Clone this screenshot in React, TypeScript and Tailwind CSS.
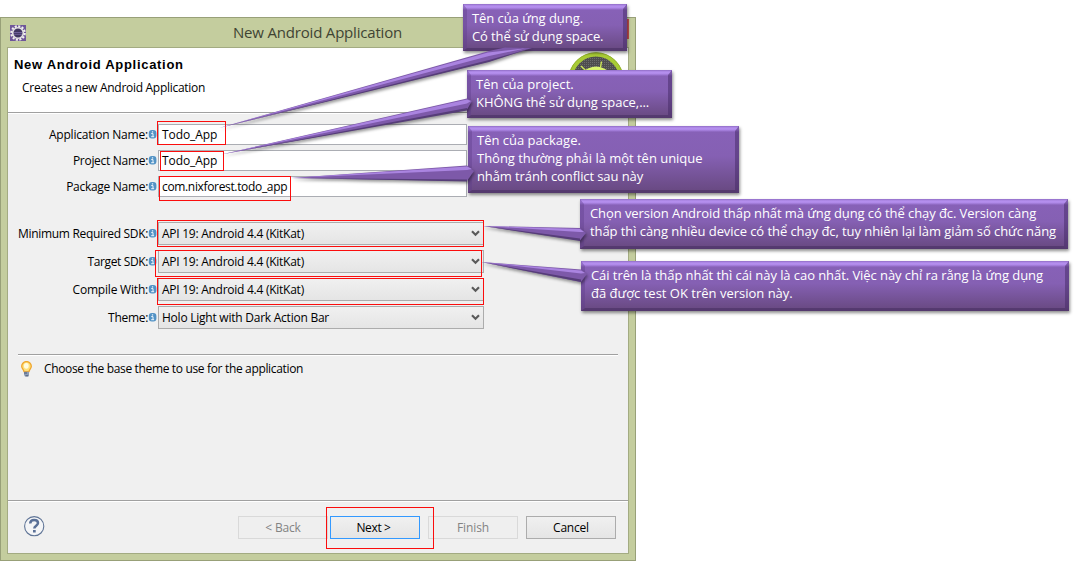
import type { ReactNode } from "react";

function InfoIcon() {
  return (
    <svg className="ml-px h-[9px] w-[7px] shrink-0 overflow-visible" viewBox="0 0 7 9">
      <rect x="-0.2" y="0" width="7.6" height="8.4" rx="3" fill="#5292c5" />
      <path d="M2.2 3.6h1.800v3M2.2 6.7h2.900" stroke="#eef6fc" strokeWidth="1" fill="none" />
      <rect x="2.9" y="1.300" width="1.300" height="1.200" fill="#eef6fc" />
    </svg>
  );
}

function Row({ label, tracking, children }: { label: string; tracking: string; children: ReactNode }) {
  return (
    <div className="flex items-center">
      <div className={`w-[140px] shrink-0 text-right ${tracking}`}>{label}</div>
      <InfoIcon />
      <div className="ml-[2px]">{children}</div>
    </div>
  );
}

function Field({ value, tracking }: { value: string; tracking: string }) {
  return (
    <div className="flex h-[21px] w-[309px] items-center border border-[#abadb3] bg-white pl-[3px]">
      <span className={tracking}>{value}</span>
    </div>
  );
}

function Combo({ value, tracking }: { value: string; tracking: string }) {
  return (
    <div className="flex h-[23px] w-[326px] items-center justify-between border border-[#acacac] bg-linear-to-b from-[#f0f0f0] to-[#e5e5e5] pr-[3px] pl-[3px]">
      <span className={tracking}>{value}</span>
      <svg className="h-[7px] w-[9px]" viewBox="0 0 9 7">
        <path d="M1 1.2l3.5 3.6L8 1.2" stroke="#5a5a5a" strokeWidth="2.1" fill="none" />
      </svg>
    </div>
  );
}

function Button({ text, look, tracking }: { text: string; look: string; tracking: string }) {
  return (
    <div className={`flex h-[23px] w-[90px] items-center justify-center border ${look}`}>
      <span className={tracking}>{text}</span>
    </div>
  );
}

function Mark({ place }: { place: string }) {
  return <div className={`absolute border border-[#fb0d0d] ${place}`} />;
}

function Callout({ place, lines }: { place: string; lines: [string, string][] }) {
  return (
    <div
      className={`absolute border-x-[4px] border-t-[5px] border-b-[3px] border-t-transparent border-r-[#452a66]/50 border-b-[#452d60]/55 border-l-[#5f3f8c]/40 bg-[linear-gradient(to_bottom,#8b68c0_0px,#a883e0_1px,#b892f2_3px,#9a74d0_5px,#8761b7_6px,#8560b3_45%,#67487f_100%)] bg-origin-border pl-[6px] font-['Open_Sans','Noto_Sans',sans-serif] text-[13px] leading-[18px] whitespace-nowrap text-white shadow-[1px_2px_3px_rgba(0,0,0,0.45)] ${place}`}
    >
      {lines.map(([text, tracking]) => (
        <div key={text} className={tracking}>{text}</div>
      ))}
    </div>
  );
}

function EclipseIcon() {
  return (
    <svg className="h-4 w-4" viewBox="0 0 16 16">
      <rect width="16" height="16" fill="#6f5799" />
      <circle cx="8" cy="8" r="6.700" fill="none" stroke="#f1f0ee" strokeWidth="2.200" strokeDasharray="2.100 1.408" />
      <circle cx="8" cy="8" r="5.300" fill="#3f3560" stroke="#e4e2e4" strokeWidth="1.600" />
      <path d="M4 7.500h8M4 9.300h8" stroke="#7565a0" strokeWidth="0.900" />
    </svg>
  );
}

function AndroidBadge() {
  return (
    <svg className="h-[56px] w-[56px]" viewBox="0 0 56 56">
      <defs>
        <pattern id="mesh" width="2" height="2" patternUnits="userSpaceOnUse">
          <rect width="2" height="2" fill="#4e4e4e" />
          <rect width="1" height="1" fill="#6c6c6c" />
        </pattern>
      </defs>
      <circle cx="28" cy="28" r="25.500" fill="url(#mesh)" stroke="#a8cb35" strokeWidth="4" />
      <circle cx="28" cy="28" r="27.300" fill="none" stroke="#8fae2a" strokeWidth="0.900" />
      <path d="M13 14l4.500 4.500M33.500 9.500l-1 6" stroke="#d0ea55" strokeWidth="1.400" />
      <path d="M13 21Q28 8 43 21z" fill="#dcf76e" />
    </svg>
  );
}

function BulbIcon() {
  return (
    <svg className="h-4 w-[11px]" viewBox="0 0 11 16">
      <path d="M5.5.6a4.7 4.7 0 0 0-4.8 4.7c0 2.4 2 3 2.3 5.3h5c.3-2.3 2.3-2.900 2.300-5.300A4.700 4.700 0 0 0 5.500.6z" fill="#ffe07a" stroke="#efa52c" strokeWidth="1.300" />
      <ellipse cx="5.300" cy="4.800" rx="2.400" ry="2.900" fill="#fffbe0" />
      <path d="M3 10.800h5v3L7 15.500H4l-1-1.700z" fill="#8d9db6" />
      <path d="M3 12h3M4.500 14.800h3" stroke="#4c5b78" strokeWidth="1" />
    </svg>
  );
}

function HelpIcon() {
  return (
    <svg className="h-[21px] w-[21px]" viewBox="0 0 21 21">
      <circle cx="10.200" cy="10.200" r="9.600" fill="#f4f5f7" stroke="#5f7496" strokeWidth="1.100" />
      <path d="M6.200 7.500c.1-2.500 1.700-3.600 3.900-3.600 2.300 0 3.900 1.200 3.900 3.200 0 2.600-3.700 2.600-3.700 5.400" fill="none" stroke="#5a7097" strokeWidth="2.500" />
      <rect x="9" y="14" width="2.700" height="2.500" fill="#5a7097" />
    </svg>
  );
}

const tails = [
  { id: "t1", body: "219,128 489,51 505,47.5 532,48 489,61.5", light: "219,128 488,52.5 525,48.5 489,56", dark: "219,128 489,60 532,48 489,62" },
  { id: "t2", body: "221,154.5 467,98.5 472,101 467,109.5", light: "221,154.5 467,99.5 471,101 467,103.5", dark: "221,154.5 467,108 467,110.5" },
  { id: "t3", body: "291,178 467,165.5 474,171 467,181", light: "291,178 467,166.5 472,169 467,170", dark: "291,178 467,179.5 467,181.5" },
  { id: "t4", body: "483,226 580,228 586,233 580,240.5", light: "483,226 580,229 584,232 580,232", dark: "483,226 580,238.5 580,241" },
  { id: "t5", body: "481,262 581,269.5 587,274 581,282", light: "481,262 581,270.5 585,273 581,273.5", dark: "481,262 581,279.5 581,282" },
];

function Tails() {
  return (
    <svg className="absolute top-0 left-0 h-[561px] w-[1075px] drop-shadow-[1px_2px_1.5px_rgba(0,0,0,0.4)]" viewBox="0 0 1075 561">
      {tails.map((t) => (
        <g key={t.id}>
          <polygon points={t.body} fill="#7d59a9" />
          <polygon points={t.light} fill="#aa84e0" />
          <polygon points={t.dark} fill="#563d78" />
        </g>
      ))}
    </svg>
  );
}

export default function App() {
  return (
    <div className="relative h-[561px] w-[1075px] overflow-hidden bg-white pt-[17px] font-['Open_Sans','Noto_Sans',sans-serif] text-[12px] text-black">
      <div className="flex h-[544px] w-[636px] flex-col border border-[#98a078] bg-[#c4cd9e] px-[6px] pb-[6px]">
        <div className="flex h-[29px] shrink-0 items-center">
          <div className="ml-[3px]"><EclipseIcon /></div>
          <div className="flex-1 pl-[207px] text-[15px] leading-[20px] tracking-[-0.19px] whitespace-nowrap text-[#3f4433]">
            <div className="-mt-[2px]">New Android Application</div>
          </div>
          <div className="mb-[8px] h-[20px] w-[45px] bg-[#c75050]" />
        </div>
        <div className="flex min-h-0 flex-1 flex-col border border-[#a3ab82] bg-[#f0f0f0]">
          <div className="flex h-[65px] shrink-0 justify-between overflow-hidden border-b border-[#a0a0a0] bg-white">
            <div>
              <div className="mt-[8px] ml-[6px] font-['Liberation_Sans',sans-serif] text-[13px] leading-[17px] font-bold tracking-[0.7px] whitespace-nowrap">New Android Application</div>
              <div className="mt-[6px] ml-[14px] leading-[18px] tracking-[-0.29px]">Creates a new Android Application</div>
            </div>
            <div className="mt-[4px] mr-[4px]"><AndroidBadge /></div>
          </div>
          <div className="flex flex-col gap-[5px] border-t border-white pt-[10px]">
            <Row label="Application Name:" tracking="tracking-[-0.2px]"><Field value="Todo_App" tracking="tracking-[-0.08px]" /></Row>
            <Row label="Project Name:" tracking="tracking-[-0.3px]"><Field value="Todo_App" tracking="tracking-[-0.08px]" /></Row>
            <Row label="Package Name:" tracking="tracking-[-0.3px]"><Field value="com.nixforest.todo_app" tracking="tracking-[-0.34px]" /></Row>
          </div>
          <div className="mt-[25px] flex flex-col gap-[5px]">
            <Row label="Minimum Required SDK:" tracking="tracking-[-0.32px]"><Combo value="API 19: Android 4.4 (KitKat)" tracking="tracking-[-0.26px]" /></Row>
            <Row label="Target SDK:" tracking="tracking-[-0.37px]"><Combo value="API 19: Android 4.4 (KitKat)" tracking="tracking-[-0.26px]" /></Row>
            <Row label="Compile With:" tracking="tracking-[-0.2px]"><Combo value="API 19: Android 4.4 (KitKat)" tracking="tracking-[-0.26px]" /></Row>
            <Row label="Theme:" tracking="tracking-[-0.3px]"><Combo value="Holo Light with Dark Action Bar" tracking="tracking-[-0.24px]" /></Row>
          </div>
          <div className="mt-[25px] ml-[10px] h-[2px] w-[600px] border-t border-b border-t-[#a0a0a0] border-b-white" />
          <div className="mt-[4px] flex items-center pl-[13px]">
            <BulbIcon />
            <span className="ml-[12px] tracking-[-0.34px]">Choose the base theme to use for the application</span>
          </div>
          <div className="mt-auto flex h-[53px] items-start border-t border-[#a0a0a0] pt-[15px] shadow-[inset_0_1px_0_#fff]">
            <div className="ml-[16px]"><HelpIcon /></div>
            <div className="ml-[193px] flex">
              <Button text="< Back" look="border-[#d9d9d9] bg-[#efefef] text-[#838383]" tracking="tracking-[-0.2px]" />
              <div className="ml-[2px]"><Button text="Next >" look="border-[#3399ff] bg-linear-to-b from-[#f0f0f0] to-[#e5e5e5]" tracking="pr-[3px] tracking-[-0.35px]" /></div>
              <div className="ml-[8px]"><Button text="Finish" look="border-[#d9d9d9] bg-[#efefef] text-[#838383]" tracking="tracking-[-0.1px]" /></div>
              <div className="ml-[8px]"><Button text="Cancel" look="border-[#acacac] bg-linear-to-b from-[#f0f0f0] to-[#e5e5e5]" tracking="tracking-[-0.2px]" /></div>
            </div>
          </div>
        </div>
      </div>

      <Mark place="left-[157px] top-[121px] h-[24px] w-[69px]" />
      <Mark place="left-[160px] top-[151px] h-[20px] w-[64px]" />
      <Mark place="left-[159px] top-[176px] h-[25px] w-[132px]" />
      <Mark place="left-[157px] top-[220px] h-[27px] w-[327px]" />
      <Mark place="left-[155px] top-[250px] h-[27px] w-[327px]" />
      <Mark place="left-[157px] top-[278px] h-[27px] w-[327px]" />
      <Mark place="left-[326px] top-[507px] h-[42px] w-[108px]" />

      <Callout place="left-[463px] top-[4px] h-[47px] w-[164px]" lines={[["Tên của ứng dụng.", "-ml-px tracking-[-0.06px]"], ["Có thể sử dụng space.", "-ml-px tracking-[-0.1px]"]]} />
      <Callout place="left-[467px] top-[70px] h-[48px] w-[205px]" lines={[["Tên của project.", "-ml-px tracking-[0.08px]"], ["KHÔNG thể sử dụng space,...", "-ml-px tracking-[-0.05px]"]]} />
      <Callout place="left-[468px] top-[126px] h-[67px] w-[271px]" lines={[["Tên của package.", "-ml-px tracking-[0px]"], ["Thông thường phải là một tên unique", "-ml-px tracking-[-0.02px]"], ["nhằm tránh conflict sau này", "-ml-px tracking-[-0.1px]"]]} />
      <Callout place="left-[580px] top-[199px] h-[50px] w-[488px]" lines={[["Chọn version Android thấp nhất mà ứng dụng có thể chạy đc. Version càng", "tracking-[-0.08px]"], ["thấp thì càng nhiều device có thể chạy đc, tuy nhiên lại làm giảm số chức năng", "tracking-[-0.07px]"]]} />
      <Callout place="left-[581px] top-[261px] h-[50px] w-[488px]" lines={[["Cái trên là thấp nhất thì cái này là cao nhất. Việc này chỉ ra rằng là ứng dụng", "tracking-[-0.065px]"], ["đã được test OK trên version này.", "tracking-[0px]"]]} />
      <Tails />
    </div>
  );
}
